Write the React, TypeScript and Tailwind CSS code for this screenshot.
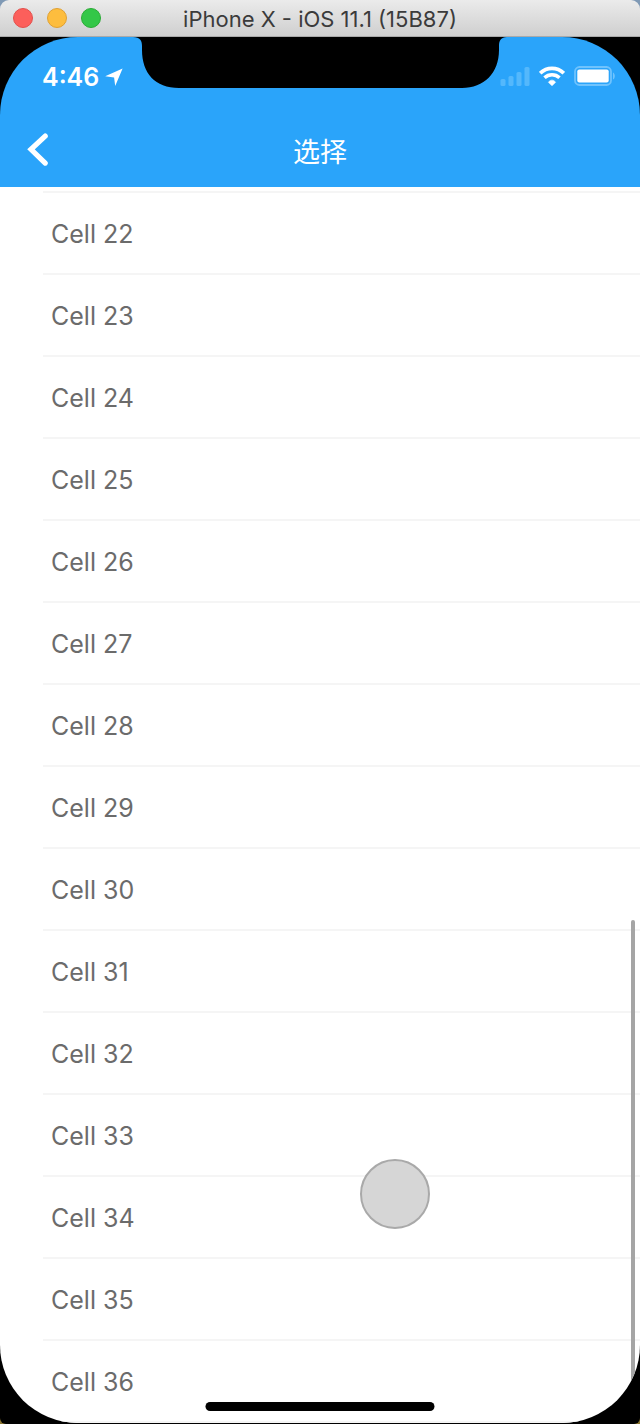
import React from "react";

const cells = Array.from({ length: 15 }, (_, i) => `Cell ${22 + i}`);

function TitleBar() {
  return (
    <header className="relative flex h-[37px] items-center justify-center border-b border-[#a9a9a9] bg-linear-to-b from-[#ebebeb] to-[#cfcfcf]">
      <div className="absolute left-[13px] flex gap-[14px]">
        <button aria-label="Close" className="size-5 rounded-full border border-[#e2504c] bg-[#fc5f5b]" />
        <button aria-label="Minimize" className="size-5 rounded-full border border-[#dfa033] bg-[#fdbd3e]" />
        <button aria-label="Zoom" className="size-5 rounded-full border border-[#2bab36] bg-[#33c748]" />
      </div>
      <h1 className="pt-[2px] text-[22px] leading-7 text-[#3b3b3b]">iPhone X - iOS 11.1 (15B87)</h1>
    </header>
  );
}

function Notch() {
  return (
    <svg aria-hidden="true" viewBox="0 0 374 51" className="absolute top-0 left-1/2 h-[51px] w-[374px] -translate-x-1/2">
      <path d="M0 0C7 .5 9 3 9 9V13C9 36 22 51 46 51H329C351 51 366 36 366 13V9C366 3 368 .5 374 0Z" fill="#000" />
    </svg>
  );
}

function StatusBar() {
  return (
    <div className="flex h-[78px] items-center justify-between pr-[25px] pl-[42px] text-white">
      <div className="flex items-center gap-[6px] pt-[2px]">
        <span className="text-[25px] leading-8 font-semibold">4:46</span>
        <svg aria-hidden="true" viewBox="0 0 18 18" className="size-[18px]">
          <path d="M17.6.4 10.2 18 9.1 9.5.2 8.3Z" fill="currentColor" />
        </svg>
      </div>
      <div className="flex items-center gap-[9px]">
        <svg aria-hidden="true" viewBox="0 0 30 19" className="h-[19px] w-[30px]" fill="#54b8fc">
          <rect x="0.5" y="12" width="5" height="7" rx="1.5" />
          <rect x="8.5" y="9" width="5" height="10" rx="1.5" />
          <rect x="16.5" y="5" width="5" height="14" rx="1.5" />
          <rect x="24.5" y="0" width="5" height="19" rx="1.5" />
        </svg>
        <svg aria-hidden="true" viewBox="0 0 26 20" className="h-[20px] w-[26px]" fill="none" stroke="currentColor">
          <path d="M1.2 7.2C7.8.7 18.2.7 24.8 7.2" strokeWidth="3.7" />
          <path d="M5.5 11.8C9.7 7.8 16.3 7.8 20.5 11.8" strokeWidth="3.5" />
          <path d="M13 19.7 9.4 16.3C11.2 13.4 14.8 13.4 16.6 16.3Z" fill="currentColor" strokeWidth="0.6" strokeLinejoin="round" />
        </svg>
        <svg aria-hidden="true" viewBox="0 0 41 20" className="h-[20px] w-[41px]">
          <rect x="1" y="1" width="36" height="18" rx="4.5" fill="none" stroke="#6fc3fd" strokeWidth="1.8" />
          <rect x="3.3" y="3.5" width="31.4" height="13" rx="2" fill="#fff" />
          <path d="M39 6.5C41.4 7.5 41.4 12.5 39 13.5Z" fill="#6fc3fd" />
        </svg>
      </div>
    </div>
  );
}

function NavBar() {
  return (
    <nav className="grid h-[72px] grid-cols-[1fr_auto_1fr] items-center px-[26px] text-white">
      <button aria-label="Back" className="justify-self-start">
        <svg aria-hidden="true" viewBox="0 0 24 36" className="h-[36px] w-[24px]">
          <path d="M19.2 3.1 5 16.3 19.2 30.1" fill="none" stroke="currentColor" strokeWidth="5.2" strokeLinejoin="miter" strokeLinecap="round" />
        </svg>
      </button>
      <h2 className="pt-[3px] text-[27px] leading-9">选择</h2>
    </nav>
  );
}

export default function App() {
  return (
    <div className="bg-linear-to-b from-[#7f99b5] to-[#8a7530] font-['Inter','Noto_Sans_CJK_SC',sans-serif]">
      <div className="overflow-hidden rounded-t-[9px] rounded-b-[6px]">
        <TitleBar />
        <main className="bg-black pb-px">
          <div className="relative overflow-hidden rounded-[78px]">
            <div className="bg-[#2aa4fa]">
              <StatusBar />
              <NavBar />
            </div>
            <Notch />
            <div className="bg-white pl-[43px]">
              <div className="h-[6px] border-b-2 border-[#f5f5f5]" />
              <ul>
                {cells.map((cell) => (
                  <li key={cell} className="flex h-[82px] items-center border-b-2 border-[#f5f5f5] pt-[2px] pl-2 text-[25px] leading-8 text-[#6b6b6b]">
                    {cell}
                  </li>
                ))}
              </ul>
            </div>
            <div className="absolute right-[5px] bottom-0 h-[503px] w-[4px] rounded-t-full bg-[#a5a5a5]" />
            <div className="absolute bottom-[194px] left-[360px] size-[70px] rounded-full border-2 border-[#a9a9a9] bg-[#d6d6d6]" />
            <div className="absolute bottom-[12px] left-1/2 h-[9px] w-[229px] -translate-x-1/2 rounded-full bg-black" />
          </div>
        </main>
      </div>
    </div>
  );
}
